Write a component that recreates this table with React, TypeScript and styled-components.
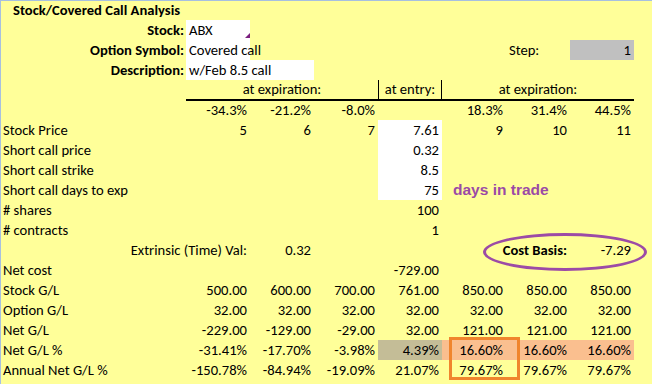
import React from 'react';
import styled, { createGlobalStyle } from 'styled-components';

const GlobalStyle = createGlobalStyle`
    body {
        margin: 0;
        background: #ffff99;
    }
`;

type CellData = {
    text?: string;
    align?: 'left' | 'right' | 'center';
    bg?: string;
    bold?: boolean;
    span?: number;
};

const num = (text: string, bg?: string): CellData => ({ text, align: 'right', bg });
const empty: CellData = {};
const WHITE = '#ffffff';
const TAN = '#c4bd97';
const PEACH = '#fabf8f';

const rows: { label: string; cells: CellData[] }[] = [
    {
        label: 'Stock Price',
        cells: [num('5'), num('6'), num('7'), num('7.61', WHITE), num('9'), num('10'), num('11')],
    },
    { label: 'Short call price', cells: [empty, empty, empty, num('0.32', WHITE)] },
    { label: 'Short call strike', cells: [empty, empty, empty, num('8.5', WHITE)] },
];

const lowerRows: { label: string; cells: CellData[] }[] = [
    { label: 'Net cost', cells: [empty, empty, empty, num('-729.00')] },
    {
        label: 'Stock G/L',
        cells: ['500.00', '600.00', '700.00', '761.00', '850.00', '850.00', '850.00'].map((t) => num(t)),
    },
    {
        label: 'Option G/L',
        cells: ['32.00', '32.00', '32.00', '32.00', '32.00', '32.00', '32.00'].map((t) => num(t)),
    },
    {
        label: 'Net G/L',
        cells: ['-229.00', '-129.00', '-29.00', '32.00', '121.00', '121.00', '121.00'].map((t) => num(t)),
    },
    {
        label: 'Net G/L %',
        cells: [
            num('-31.41%'),
            num('-17.70%'),
            num('-3.98%'),
            num('4.39%', TAN),
            num('16.60%', PEACH),
            num('16.60%', PEACH),
            num('16.60%', PEACH),
        ],
    },
    {
        label: 'Annual Net G/L %',
        cells: ['-150.78%', '-84.94%', '-19.09%', '21.07%', '79.67%', '79.67%', '79.67%'].map((t) => num(t)),
    },
];

const renderCells = (cells: CellData[]) =>
    cells.map((c, i) => (
        <Cell key={i} $align={c.align} $bg={c.bg} $bold={c.bold} $span={c.span}>
            {c.text}
        </Cell>
    ));

const App = () => {
    return (
        <>
            <GlobalStyle />
            <Sheet>
                <Row $height={19}>
                    <Title>Stock/Covered Call Analysis</Title>
                </Row>
                <Row>
                    <FieldLabel>Stock:</FieldLabel>
                    <Cell $bg={WHITE}>
                        ABX
                        <Marker />
                    </Cell>
                </Row>
                <Row>
                    <FieldLabel>Option Symbol:</FieldLabel>
                    <Cell $bg={WHITE} $overflow>
                        Covered call
                    </Cell>
                    <Cell />
                    <Cell />
                    <Cell />
                    <Cell />
                    <Cell>Step:</Cell>
                    <Cell $align="right" $bg="#c0c0c0">
                        1
                    </Cell>
                </Row>
                <Row>
                    <FieldLabel>Description:</FieldLabel>
                    <Cell $bg={WHITE} $span={2}>
                        w/Feb 8.5 call
                    </Cell>
                </Row>
                <Row>
                    <Cell />
                    <HeaderCell $span={3}>at expiration:</HeaderCell>
                    <HeaderCell $divided>at entry:</HeaderCell>
                    <HeaderCell $span={3}>at expiration:</HeaderCell>
                </Row>
                <Row>
                    <Cell />
                    {renderCells([
                        num('-34.3%'),
                        num('-21.2%'),
                        num('-8.0%'),
                        empty,
                        num('18.3%'),
                        num('31.4%'),
                        num('44.5%'),
                    ])}
                </Row>
                {rows.map((r) => (
                    <Row key={r.label}>
                        <Label>{r.label}</Label>
                        {renderCells(r.cells)}
                    </Row>
                ))}
                <Row>
                    <Label>Short call days to exp</Label>
                    {renderCells([empty, empty, empty, num('75', WHITE)])}
                    <Note>days in trade</Note>
                </Row>
                <Row>
                    <Label># shares</Label>
                    {renderCells([empty, empty, empty, num('100')])}
                </Row>
                <Row>
                    <Label># contracts</Label>
                    {renderCells([empty, empty, empty, num('1')])}
                </Row>
                <Row>
                    <Cell />
                    <SpillRight>Extrinsic (Time) Val:</SpillRight>
                    <Cell $align="right">0.32</Cell>
                    <Cell />
                    <Cell />
                    <Cell />
                    <SpillRight $bold>Cost Basis:</SpillRight>
                    <Cell $align="right">-7.29</Cell>
                </Row>
                {lowerRows.map((r) => (
                    <Row key={r.label}>
                        <Label>{r.label}</Label>
                        {renderCells(r.cells)}
                    </Row>
                ))}
                <CostOval />
                <BestBox />
            </Sheet>
        </>
    );
};

const Sheet = styled.div`
    position: relative;
    width: 651px;
    height: 383px;
    background: #ffff99;
    border-top: 1px solid #a7c0e0;
    border-left: 1px solid #a7c0e0;
    font-family: Carlito, Lato, 'Liberation Sans', sans-serif;
    font-size: 14.6px;
    color: #000000;
    overflow: hidden;
`;

const Row = styled.div<{ $height?: number }>`
    display: grid;
    grid-template-columns: 185px repeat(7, 64px) 1fr;
    height: ${(p) => p.$height ?? 20}px;
    line-height: ${(p) => p.$height ?? 20}px;
`;

const Cell = styled.div<{
    $align?: string;
    $bg?: string;
    $bold?: boolean;
    $span?: number;
    $overflow?: boolean;
}>`
    position: relative;
    grid-column: span ${(p) => p.$span ?? 1};
    padding: 0 3px;
    text-align: ${(p) => p.$align ?? 'left'};
    background: ${(p) => p.$bg ?? 'transparent'};
    font-weight: ${(p) => (p.$bold ? 700 : 400)};
    white-space: nowrap;
    overflow: ${(p) => (p.$overflow ? 'visible' : 'hidden')};
`;

const SpillRight = styled.div<{ $bold?: boolean }>`
    display: flex;
    justify-content: flex-end;
    padding: 0 3px;
    font-weight: ${(p) => (p.$bold ? 700 : 400)};
    white-space: nowrap;
`;

const Title = styled.div`
    grid-column: span 3;
    padding-left: 12px;
    font-weight: 700;
    white-space: nowrap;
`;

const FieldLabel = styled.div`
    padding-right: 2px;
    text-align: right;
    font-weight: 700;
    white-space: nowrap;
`;

const Label = styled.div`
    padding-left: 2px;
    white-space: nowrap;
`;

const HeaderCell = styled.div<{ $span?: number; $divided?: boolean }>`
    grid-column: span ${(p) => p.$span ?? 1};
    box-sizing: border-box;
    text-align: center;
    white-space: nowrap;
    border-bottom: 2px solid #000000;
    border-left: ${(p) => (p.$divided ? '1px solid #000000' : 'none')};
    border-right: ${(p) => (p.$divided ? '1px solid #000000' : 'none')};
    line-height: 19px;
`;

const Marker = styled.span`
    position: absolute;
    right: 0;
    bottom: 2px;
    width: 0;
    height: 0;
    border-left: 5px solid transparent;
    border-bottom: 5px solid #7b1f7f;
`;

const Note = styled.div`
    grid-column: span 3;
    padding-left: 11px;
    font-family: 'Liberation Sans', Arial, sans-serif;
    font-weight: 700;
    font-size: 15.5px;
    color: #9b4aa6;
    white-space: nowrap;
`;

const CostOval = styled.div`
    position: absolute;
    left: 482px;
    top: 232px;
    width: 158px;
    height: 32px;
    border: 3px solid #9c4ba6;
    border-radius: 50%;
`;

const BestBox = styled.div`
    position: absolute;
    left: 448px;
    top: 336px;
    width: 65px;
    height: 37px;
    border: 3px solid #f0852d;
`;

export default App;
